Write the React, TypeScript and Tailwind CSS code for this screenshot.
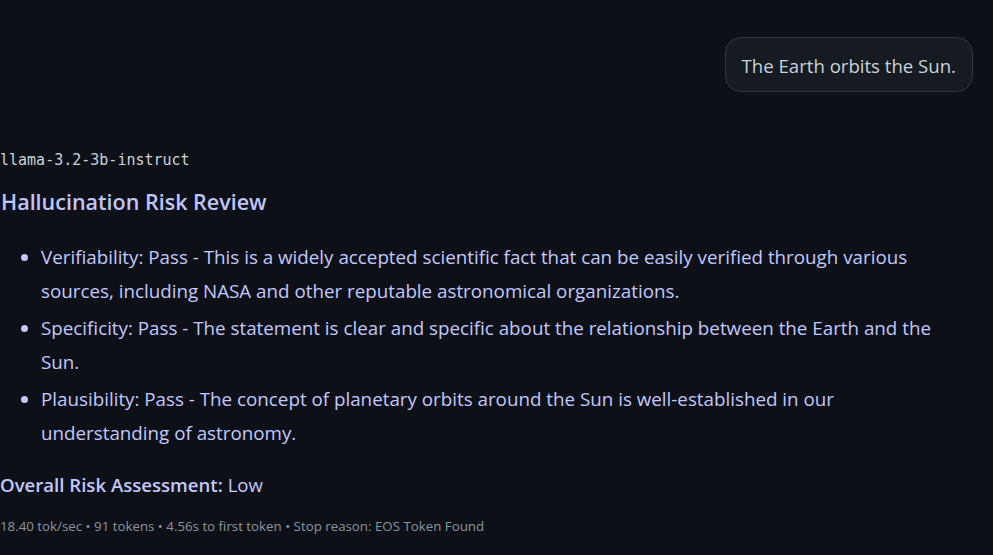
import React from "react";

const items = [
  "Verifiability: Pass - This is a widely accepted scientific fact that can be easily verified through various sources, including NASA and other reputable astronomical organizations.",
  "Specificity: Pass - The statement is clear and specific about the relationship between the Earth and the Sun.",
  "Plausibility: Pass - The concept of planetary orbits around the Sun is well-established in our understanding of astronomy.",
];

export default function App() {
  return (
    <div className="w-[993px] h-[555px] overflow-hidden bg-[#0d1117] font-['Open_Sans',sans-serif]">
      <div className="flex justify-end pt-[37px] pr-[20px]">
        <div className="h-[55px] flex items-center px-[16px] pt-[3px] rounded-[16px] border border-[#30363d] bg-[#161b22] text-[#c9d1d9] text-[18.6px]">
          The Earth orbits the Sun.
        </div>
      </div>

      <div className="pr-[40px] mt-[58px]">
        <div className="font-['DejaVu_Sans_Mono',monospace] text-[15px] leading-[20px] text-[#c9d1d9]">
          llama-3.2-3b-instruct
        </div>

        <h2 className="mt-[17px] text-[21.5px] leading-[30px] font-semibold text-[#c0c5fd] pl-px">
          Hallucination Risk Review
        </h2>

        <ul className="mt-[23px] list-disc pl-[41px] text-[18.8px] leading-[34px] text-[#c3c8fe] marker:text-[#c3c8fe]">
          {items.map((it) => (
            <li key={it} className="mb-[3px]">
              {it}
            </li>
          ))}
        </ul>

        <p className="mt-[20px] text-[18.6px] leading-[30px] text-[#c3c8fe]">
          <span className="font-semibold">Overall Risk Assessment:</span>
          <span> Low</span>
        </p>

        <div className="mt-[17px] text-[13.3px] leading-[18px] text-[#8b949e]">
          18.40 tok/sec • 91 tokens • 4.56s to first token • Stop reason: EOS Token Found
        </div>
      </div>
    </div>
  );
}
